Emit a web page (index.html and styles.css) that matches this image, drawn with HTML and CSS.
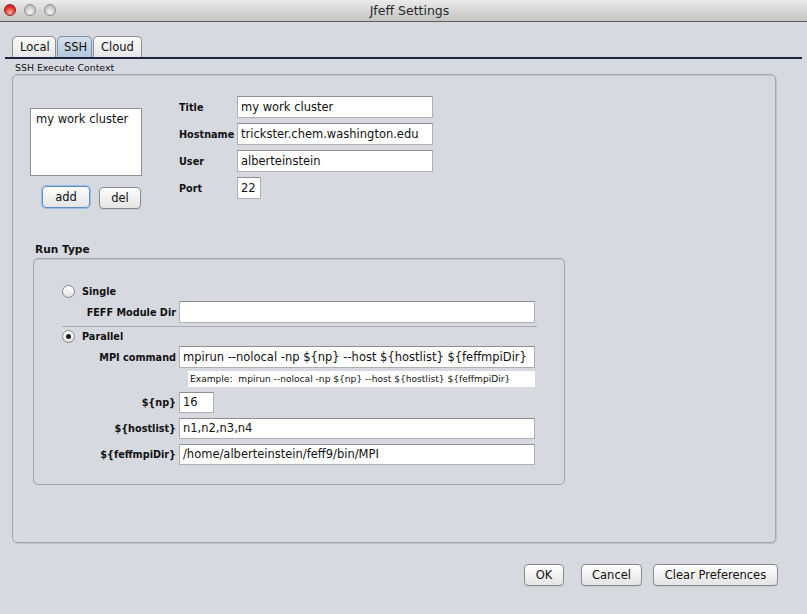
FILE: index.html
```html
<!DOCTYPE html>
<html>
<head>
<meta charset="utf-8">
<title>Jfeff Settings</title>
<link rel="stylesheet" href="styles.css">
</head>
<body>
<div class="titlebar">
  <div class="lights">
    <span class="light red"></span>
    <span class="light"></span>
    <span class="light"></span>
  </div>
  <div class="wintitle">Jfeff Settings</div>
  <div></div>
</div>
<div class="content">
  <div class="tabstrip">
    <div class="tab">Local</div>
    <div class="tab active">SSH</div>
    <div class="tab">Cloud</div>
  </div>
  <div class="caption">SSH Execute Context</div>
  <div class="panel">
    <div class="top">
      <div class="listcol">
        <div class="list"><div class="item">my work cluster</div></div>
        <div class="listbtns">
          <button class="btn focus w-add">add</button>
          <button class="btn w-del">del</button>
        </div>
      </div>
      <div class="form">
        <label class="lbl">Title</label><div class="field w-wide">my work cluster</div>
        <label class="lbl">Hostname</label><div class="field w-wide">trickster.chem.washington.edu</div>
        <label class="lbl">User</label><div class="field w-wide">alberteinstein</div>
        <label class="lbl">Port</label><div class="field w-port">22</div>
      </div>
    </div>
    <div class="runhead">Run Type</div>
    <div class="runpanel">
      <div class="radiorow first"><span class="radio"></span><span class="rlabel">Single</span></div>
      <div class="frow r-feff"><span class="lbl r">FEFF Module Dir</span><div class="field w-run"></div></div>
      <div class="sep"></div>
      <div class="radiorow second"><span class="radio on"></span><span class="rlabel">Parallel</span></div>
      <div class="frow r-mpi"><span class="lbl r">MPI command</span><div class="field w-run">mpirun --nolocal -np ${np} --host ${hostlist} ${feffmpiDir}</div></div>
      <div class="frow r-ex"><span></span><div class="example">Example:&nbsp; mpirun --nolocal -np ${np} --host ${hostlist} ${feffmpiDir}</div></div>
      <div class="frow r-small"><span class="lbl r">${np}</span><div class="field sm w-np">16</div></div>
      <div class="frow r-small"><span class="lbl r">${hostlist}</span><div class="field sm w-run">n1,n2,n3,n4</div></div>
      <div class="frow r-small"><span class="lbl r">${feffmpiDir}</span><div class="field sm w-run">/home/alberteinstein/feff9/bin/MPI</div></div>
    </div>
  </div>
  <div class="footer">
    <button class="btn w-ok">OK</button>
    <button class="btn w-cancel">Cancel</button>
    <button class="btn w-clear">Clear Preferences</button>
  </div>
</div>
</body>
</html>
```
FILE: styles.css
```css
* { box-sizing: border-box; }
html, body { margin: 0; padding: 0; }
body {
  width: 807px;
  height: 614px;
  overflow: hidden;
  background: #d6d9df;
  font-family: "DejaVu Sans", "Liberation Sans", sans-serif;
  font-size: 11.5px;
  color: #111;
}
.titlebar {
  height: 22px;
  display: grid;
  grid-template-columns: 1fr auto 1fr;
  align-items: center;
  background: linear-gradient(#ebebeb, #d2d2d2 60%, #c4c4c4);
  border-bottom: 1px solid #5d5d5d;
}
.lights { display: flex; gap: 8px; padding-left: 4px; padding-bottom: 1px; }
.light {
  width: 12px; height: 12px; border-radius: 50%;
  background: radial-gradient(circle at 50% 70%, #f4f4f4, #c9c9c9 60%, #a9a9a9);
  border: 1px solid #8f8f8f;
}
.light.red {
  background: radial-gradient(circle at 50% 75%, #ffb0a8, #f0342a 55%, #b3110b);
  border-color: #8b2a26;
}
.wintitle { font-size: 12.5px; color: #2a2a2a; padding-left: 12px; }

.content { padding-top: 14px; }
.tabstrip {
  margin: 0 5px;
  padding-left: 7px;
  display: flex;
  border-bottom: 2px solid #1b2440;
  height: 23px;
}
.tab {
  height: 21px;
  padding: 0 7px;
  line-height: 20px;
  border: 1px solid #8e8e8e;
  border-bottom: none;
  border-radius: 5px 5px 0 0;
  background: linear-gradient(#fafafa, #e6e6e6);
  margin-right: 1px;
}
.tab:nth-child(1) { width: 44px; }
.tab:nth-child(2) { width: 35px; padding: 0 6px; }
.tab:nth-child(3) { width: 49px; }
.tab.active {
  background: linear-gradient(#d5e1ed, #b2c6da);
  border-color: #7d8ea3;
}
.caption {
  margin: 3px 0 0 15px;
  font-size: 9.4px;
  height: 12px;
  line-height: 12px;
}
.panel {
  margin: 0 0 0 12px;
  width: 764px;
  height: 469px;
  border: 1px solid #a2a5ab;
  border-radius: 5px;
  box-shadow: inset 0 1px 0 #c3c6cb, 1px 1px 0 #c1c4ca;
}
.top { display: flex; align-items: flex-start; }
.listcol { margin: 33px 0 0 17px; }
.list {
  width: 112px; height: 68px;
  background: #fff;
  border: 1px solid #8d8f94;
  padding: 3px 5px;
}
.item { line-height: 14px; }
.listbtns { display: flex; gap: 9px; margin-top: 10px; padding-left: 12px; }
.btn {
  font-family: inherit;
  font-size: 11.5px;
  color: #111;
  height: 22px;
  padding: 0;
  border: 1px solid #8a8a8a;
  border-radius: 4px;
  background: linear-gradient(#ffffff, #f1f1f1 50%, #e4e4e4);
  box-shadow: 0 1px 0 rgba(0,0,0,0.08);
}
.btn.focus { border-color: #5f8ec4; box-shadow: 0 0 0 1px #9cbfe6; }
.w-add { width: 48px; }
.w-del { width: 42px; margin-top: 1px; }
.form {
  margin: 21px 0 0 37px;
  display: grid;
  grid-template-columns: 58px auto;
  grid-auto-rows: 22px;
  row-gap: 5px;
  align-content: start;
  align-items: center;
  justify-items: start;
}
.lbl { font-weight: bold; font-size: 9.7px; }
.lbl.r { text-align: right; }
.field {
  height: 22px;
  background: #fff;
  border: 1px solid #b0b0b0;
  border-top-color: #8f8f8f;
  padding: 0 3px;
  line-height: 20px;
  white-space: nowrap;
  overflow: hidden;
}
.field.sm { height: 21px; line-height: 19px; }
.w-wide { width: 196px; }
.w-port { width: 24px; }
.w-run { width: 356px; }
.w-np { width: 35px; }
.runhead {
  margin: 33px 0 0 22px;
  font-weight: bold;
  font-size: 10.6px;
  height: 14px;
  line-height: 14px;
}
.runpanel {
  margin: 2px 0 0 20px;
  width: 532px;
  height: 227px;
  border: 1px solid #a2a5ab;
  border-radius: 5px;
  box-shadow: inset 0 1px 0 #c3c6cb;
  padding-left: 28px;
}
.radiorow { display: flex; align-items: center; gap: 7px; height: 14px; }
.radiorow.first { margin-top: 25px; }
.radiorow.second { margin-top: 2px; }
.radio {
  width: 13px; height: 13px; border-radius: 50%;
  border: 1px solid #868686;
  background: linear-gradient(#ffffff, #e2e2e2);
  display: flex; align-items: center; justify-content: center;
}
.radio.on::after {
  content: "";
  width: 5px; height: 5px; border-radius: 50%;
  background: #1e1e1e;
}
.rlabel { font-weight: bold; font-size: 9.7px; }
.frow {
  display: grid;
  grid-template-columns: 114px auto;
  column-gap: 3px;
  align-items: center;
  justify-items: start;
}
.frow .lbl.r { justify-self: end; }
.r-feff { margin-top: 3px; }
.r-mpi { margin-top: 3px; }
.r-ex { margin-top: 3px; }
.r-small { margin-top: 5px; }
.sep { width: 475px; height: 1px; background: #a9acb1; margin-top: 3px; }
.example {
  margin-left: 9px;
  width: 347px;
  height: 16px;
  line-height: 16px;
  background: #fff;
  font-size: 9.1px;
  padding-left: 2px;
  white-space: nowrap;
}
.footer {
  display: flex;
  justify-content: flex-end;
  margin-top: 21px;
  padding-right: 29px;
}
.w-ok { width: 40px; margin-right: 17px; }
.w-cancel { width: 61px; margin-right: 11px; }
.w-clear { width: 125px; }
```
